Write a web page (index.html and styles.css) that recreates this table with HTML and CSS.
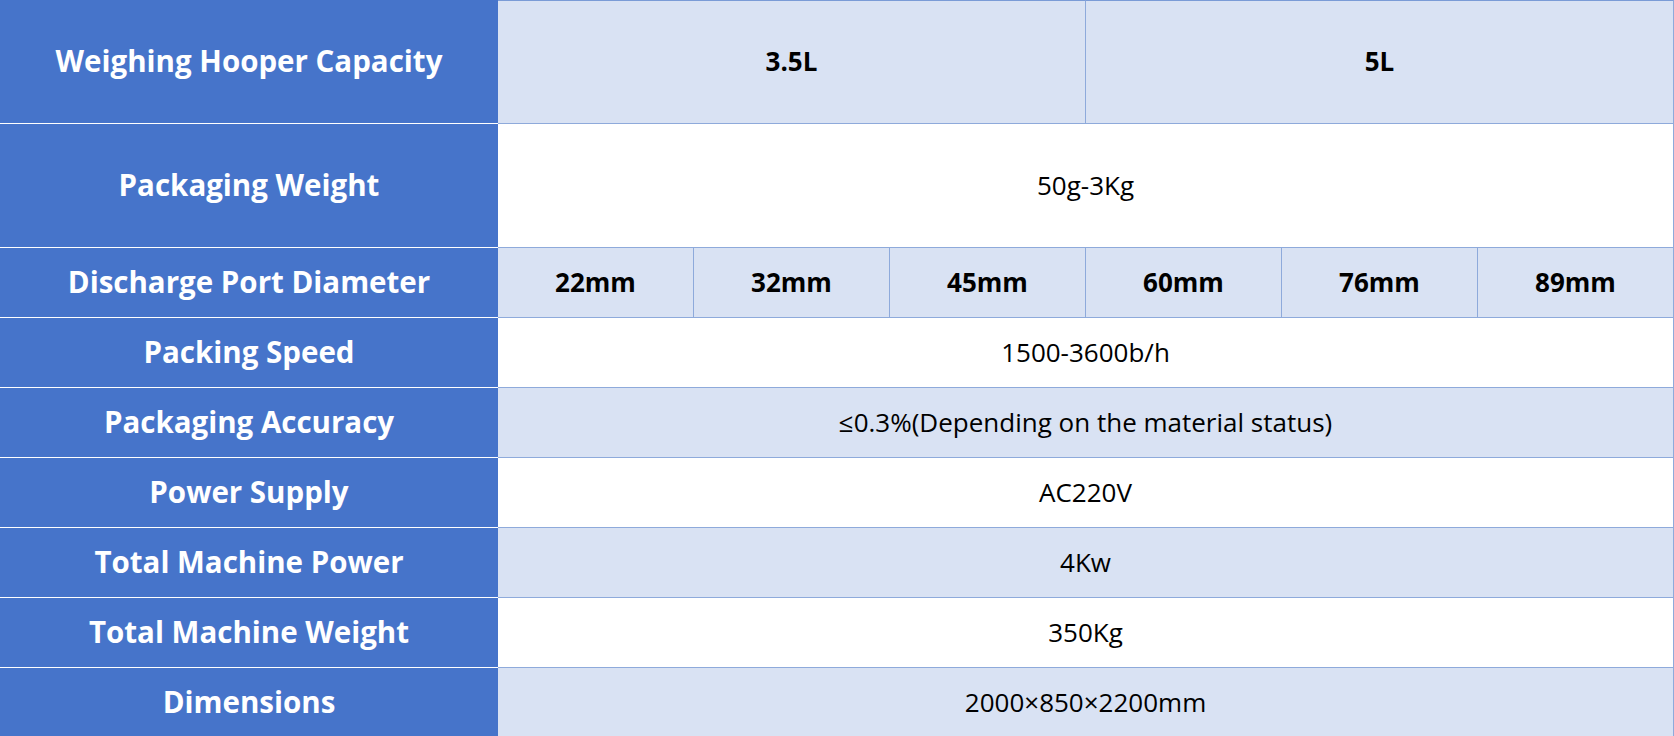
FILE: index.html
```html
<!DOCTYPE html>
<html lang="en">
<head>
<meta charset="utf-8">
<title>Specifications</title>
<link rel="stylesheet" href="styles.css">
</head>
<body>
<div class="spec">
  <div class="head">Weighing Hooper Capacity</div>
  <div class="cell band bold span3">3.5L</div>
  <div class="cell band bold span3">5L</div>

  <div class="head tall">Packaging Weight</div>
  <div class="cell span6">50g-3Kg</div>

  <div class="head">Discharge Port Diameter</div>
  <div class="cell band bold">22mm</div>
  <div class="cell band bold">32mm</div>
  <div class="cell band bold">45mm</div>
  <div class="cell band bold">60mm</div>
  <div class="cell band bold">76mm</div>
  <div class="cell band bold">89mm</div>

  <div class="head">Packing Speed</div>
  <div class="cell span6">1500-3600b/h</div>

  <div class="head">Packaging Accuracy</div>
  <div class="cell band span6">≤0.3%(Depending on the material status)</div>

  <div class="head">Power Supply</div>
  <div class="cell span6">AC220V</div>

  <div class="head">Total Machine Power</div>
  <div class="cell band span6">4Kw</div>

  <div class="head">Total Machine Weight</div>
  <div class="cell span6">350Kg</div>

  <div class="head">Dimensions</div>
  <div class="cell band span6">2000×850×2200mm</div>
</div>
</body>
</html>
```

FILE: styles.css
```css
html, body {
  margin: 0;
  padding: 0;
  background: #ffffff;
  overflow: hidden;
}

.spec {
  display: grid;
  width: 1674px;
  grid-template-columns: 498px repeat(6, 1fr);
  grid-template-rows: 124px 124px repeat(7, 70px);
  font-family: "Open Sans", "Noto Sans", sans-serif;
  font-size: 26px;
  color: #000000;
}

.head {
  display: flex;
  align-items: center;
  justify-content: center;
  background: #4674ca;
  color: #ffffff;
  font-weight: 700;
  font-size: 29.5px;
  border-bottom: 1px solid #ffffff;
  box-sizing: border-box;
  padding-bottom: 2px;
}

.cell {
  display: flex;
  align-items: center;
  justify-content: center;
  background: #ffffff;
  border-bottom: 1px solid #8eaadb;
  border-right: 1px solid #8eaadb;
  box-sizing: border-box;
  padding-bottom: 2px;
}

.spec > .cell:nth-child(2),
.spec > .cell:nth-child(3) {
  border-top: 1px solid #7a9bd6;
}

.band {
  background: #d9e2f3;
}

.bold {
  font-weight: 700;
}

.span3 {
  grid-column: span 3;
}

.span6 {
  grid-column: span 6;
}
```
